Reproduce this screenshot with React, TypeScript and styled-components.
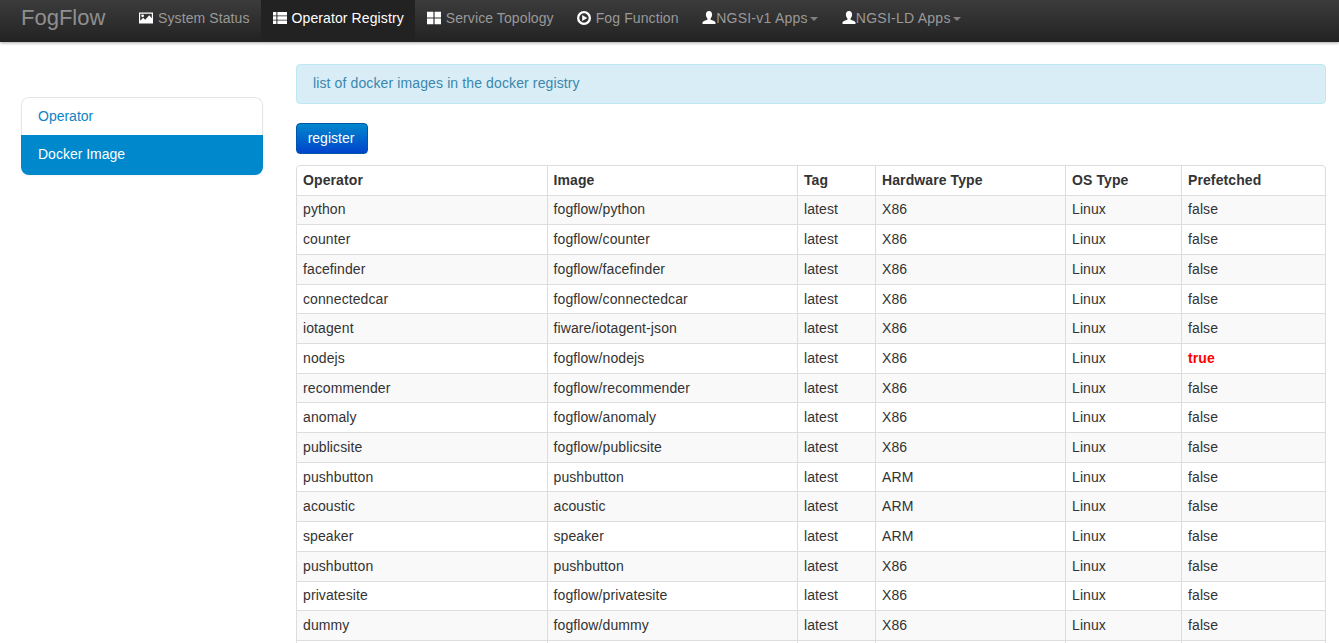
import React from "react";
import styled, { createGlobalStyle } from "styled-components";

const GlobalStyle = createGlobalStyle`
  html, body {
    margin: 0;
    height: 643px;
    overflow: hidden;
    background: #ffffff;
  }
  body {
    font-family: "Liberation Sans", Arial, sans-serif;
    font-size: 14px;
    line-height: 20px;
    color: #333333;
  }
  * {
    box-sizing: border-box;
  }
`;

const PictureIcon = () => (
  <NavSvg viewBox="0 0 14 14">
    <path fill="currentColor" fillRule="evenodd" d="M0 1.5h14v11H0zM1.2 2.700v7l3-3 2 2 4-4.500 2.600 3V2.700zM3.600 3.400a1.400 1.400 0 1 1 0 2.800 1.400 1.400 0 0 1 0-2.800z" />
  </NavSvg>
);

const ListIcon = () => (
  <NavSvg viewBox="0 0 14 14">
    <path fill="currentColor" d="M0 1h3.400v3.400H0zM4.400 1H14v3.400H4.400zM0 5.300h3.400v3.400H0zM4.400 5.300H14v3.400H4.400zM0 9.600h3.400V13H0zM4.400 9.600H14V13H4.400z" />
  </NavSvg>
);

const LargeIcon = () => (
  <NavSvg viewBox="0 0 14 14">
    <path fill="currentColor" d="M0 .8h6.400v5.700H0zM7.600.8H14v5.700H7.600zM0 7.600h6.400v5.700H0zM7.600 7.600H14v5.700H7.600z" />
  </NavSvg>
);

const PlayCircleIcon = () => (
  <NavSvg viewBox="0 0 14 14">
    <path fill="currentColor" fillRule="evenodd" d="M7 0a7 7 0 1 1 0 14A7 7 0 0 1 7 0zm0 2.300a4.700 4.700 0 1 0 0 9.400 4.700 4.700 0 0 0 0-9.400z" />
    <path fill="currentColor" d="M5.200 3.900L10.300 7l-5.100 3.100z" />
  </NavSvg>
);

const UserIcon = () => (
  <UserSvg viewBox="0 0 14 14">
    <path fill="currentColor" d="M7 0c2 0 3.100 1.500 3.100 3.600 0 1.500-.6 3-1.500 3.900v1.300c1.800.6 4.400 1.300 4.900 2.400v1.800H.5v-1.800c.5-1.100 3.100-1.800 4.900-2.400V7.500c-.9-.9-1.500-2.400-1.500-3.900C3.900 1.500 5 0 7 0z" />
  </UserSvg>
);

const rows: [string, string, string, string?][] = [
  ["python", "fogflow/python", "X86"],
  ["counter", "fogflow/counter", "X86"],
  ["facefinder", "fogflow/facefinder", "X86"],
  ["connectedcar", "fogflow/connectedcar", "X86"],
  ["iotagent", "fiware/iotagent-json", "X86"],
  ["nodejs", "fogflow/nodejs", "X86", "true"],
  ["recommender", "fogflow/recommender", "X86"],
  ["anomaly", "fogflow/anomaly", "X86"],
  ["publicsite", "fogflow/publicsite", "X86"],
  ["pushbutton", "pushbutton", "ARM"],
  ["acoustic", "acoustic", "ARM"],
  ["speaker", "speaker", "ARM"],
  ["pushbutton", "pushbutton", "X86"],
  ["privatesite", "fogflow/privatesite", "X86"],
  ["dummy", "fogflow/dummy", "X86"],
];

const App = () => {
  return (
    <>
      <GlobalStyle />
      <Navbar>
        <Brand>FogFlow</Brand>
        <NavItem><PictureIcon /> System Status</NavItem>
        <NavItem $active><ListIcon /> Operator Registry</NavItem>
        <NavItem><LargeIcon /> Service Topology</NavItem>
        <NavItem><PlayCircleIcon /> Fog Function</NavItem>
        <NavItem $tight><UserIcon />NGSI-v1 Apps<Caret /></NavItem>
        <NavItem $tight><UserIcon />NGSI-LD Apps<Caret /></NavItem>
      </Navbar>
      <Page>
        <Sidebar>
          <SideLink>Operator</SideLink>
          <SideLink $active>Docker Image</SideLink>
        </Sidebar>
        <Main>
          <InfoBox>list of docker images in the docker registry</InfoBox>
          <RegisterButton>register</RegisterButton>
          <Table>
            <colgroup>
              <col style={{ width: 249.5 }} />
              <col style={{ width: 250.5 }} />
              <col style={{ width: 78 }} />
              <col style={{ width: 190 }} />
              <col style={{ width: 116 }} />
              <col />
            </colgroup>
            <thead>
              <tr>
                <HeadCell>Operator</HeadCell>
                <HeadCell>Image</HeadCell>
                <HeadCell>Tag</HeadCell>
                <HeadCell>Hardware Type</HeadCell>
                <HeadCell>OS Type</HeadCell>
                <HeadCell>Prefetched</HeadCell>
              </tr>
            </thead>
            <tbody>
              {rows.map(([name, image, hardware, prefetched], i) => (
                <Row key={i} $odd={i % 2 === 0}>
                  <Cell>{name}</Cell>
                  <Cell>{image}</Cell>
                  <Cell>latest</Cell>
                  <Cell>{hardware}</Cell>
                  <Cell>Linux</Cell>
                  <Cell>{prefetched ? <Flag>{prefetched}</Flag> : "false"}</Cell>
                </Row>
              ))}
              <Row>
                <Cell>&nbsp;</Cell>
                <Cell />
                <Cell />
                <Cell />
                <Cell />
                <Cell />
              </Row>
            </tbody>
          </Table>
        </Main>
      </Page>
    </>
  );
};

const NavSvg = styled.svg`
  width: 14px;
  height: 14px;
  margin-right: 1px;
  color: #ffffff;
  flex: none;
`;

const UserSvg = styled(NavSvg)`
  margin-right: 0;
`;

const Navbar = styled.div`
  display: flex;
  align-items: stretch;
  height: 42px;
  padding-left: 21px;
  background-image: linear-gradient(to bottom, #3c3c3c, #222222);
  box-shadow: 0 1px 3px rgba(0, 0, 0, 0.35);
`;

const Brand = styled.div`
  display: flex;
  align-items: center;
  width: 106.5px;
  padding-bottom: 6px;
  font-size: 22px;
  color: #8f8f8f;
`;

const NavItem = styled.div<{ $active?: boolean; $tight?: boolean }>`
  display: flex;
  align-items: center;
  gap: ${(p) => (p.$tight ? "0" : "4px")};
  padding: 0 ${(p) => (p.$tight ? "12px" : "11.5px")} 6px;
  font-size: 14px;
  letter-spacing: ${(p) => (p.$tight ? "0.25px" : "0.1px")};
  color: ${(p) => (p.$active ? "#ffffff" : "#999999")};
  background: ${(p) => (p.$active ? "#222222" : "transparent")};
`;

const Caret = styled.span`
  width: 0;
  height: 0;
  margin-left: 2px;
  margin-top: 1px;
  border-top: 4px solid #808080;
  border-left: 4.500px solid transparent;
  border-right: 4.500px solid transparent;
`;

const Page = styled.div`
  display: flex;
  align-items: flex-start;
  padding: 22px 13px 0 21px;
  gap: 33px;
`;

const Sidebar = styled.div`
  flex: none;
  width: 242px;
  margin-top: 33px;
  border-radius: 8px;
  box-shadow: 0 1px 2px rgba(0, 0, 0, 0.05);
  overflow: hidden;
  background: #ffffff;
`;

const SideLink = styled.div<{ $active?: boolean }>`
  height: ${(p) => (p.$active ? "40px" : "38px")};
  padding: ${(p) => (p.$active ? "9px 17px" : "8px 16px")};
  color: ${(p) => (p.$active ? "#ffffff" : "#0f84c5")};
  background: ${(p) => (p.$active ? "#0088cc" : "transparent")};
  border: ${(p) => (p.$active ? "0" : "1px solid #e5e5e5")};
  border-bottom: 0;
  border-radius: ${(p) => (p.$active ? "0" : "8px 8px 0 0")};
`;

const Main = styled.div`
  flex: 1;
  min-width: 0;
`;

const InfoBox = styled.div`
  height: 40px;
  padding: 8px 16px;
  letter-spacing: 0.12px;
  color: #3a87ad;
  background: #d9edf7;
  border: 1px solid #bce8f1;
  border-radius: 4px;
`;

const RegisterButton = styled.button`
  display: block;
  width: 72px;
  height: 31px;
  margin: 19px 0 11px;
  padding: 0 2px 2px 0;
  font: inherit;
  color: #ffffff;
  background-image: linear-gradient(to bottom, #0088cc, #0044cc);
  border: 1px solid #0055aa;
  border-radius: 4px;
`;

const Table = styled.table`
  width: 100%;
  table-layout: fixed;
  border-collapse: separate;
  border-spacing: 0;
  border: 1px solid #dddddd;
  border-radius: 4px;
`;

const HeadCell = styled.th`
  height: 28.6px;
  padding: 0 6px 1px;
  font-weight: bold;
  letter-spacing: 0.1px;
  text-align: left;
  border-left: 1px solid #dddddd;

  &:first-child {
    border-left: 0;
  }
`;

const Row = styled.tr<{ $odd?: boolean }>`
  background: ${(p) => (p.$odd ? "#f9f9f9" : "transparent")};
`;

const Cell = styled.td`
  height: 29.69px;
  padding: 0 6px 1px;
  letter-spacing: 0.1px;
  border-top: 1px solid #dddddd;
  border-left: 1px solid #dddddd;

  &:first-child {
    border-left: 0;
  }
`;

const Flag = styled.span`
  font-weight: bold;
  color: #ff0000;
`;

export default App;
